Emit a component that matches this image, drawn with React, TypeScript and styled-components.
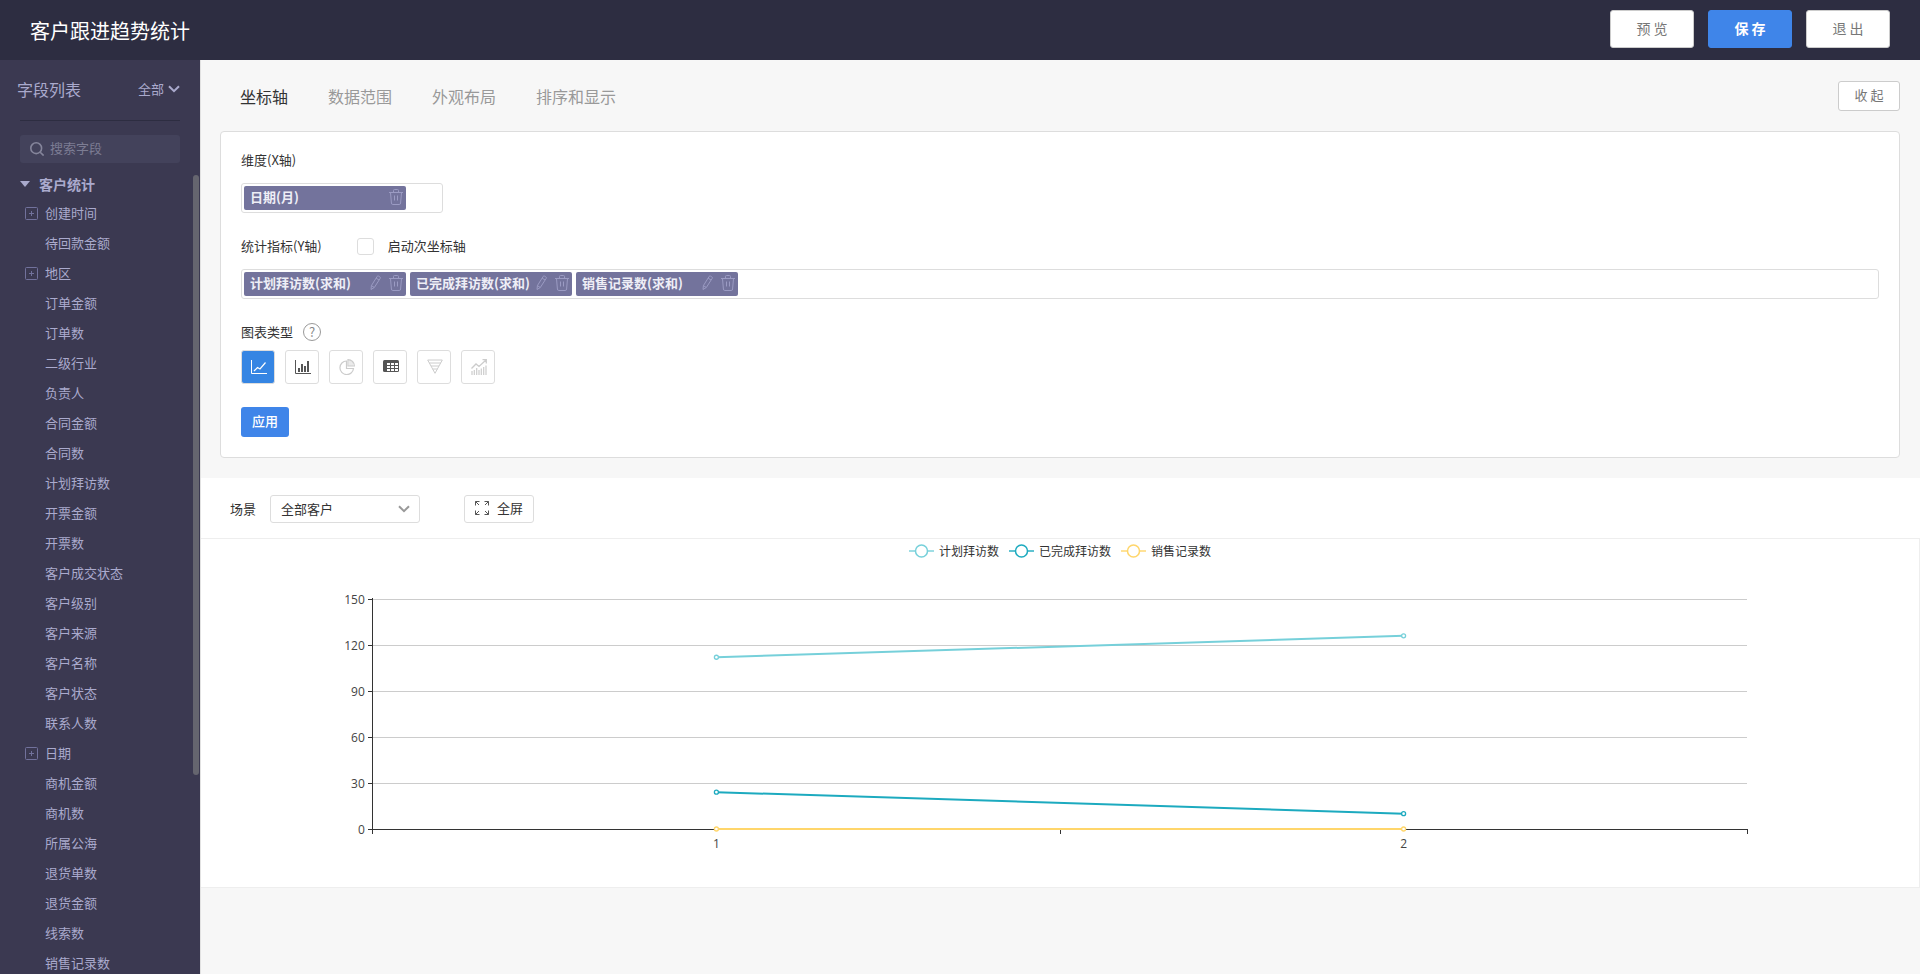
import React, { useState } from "react";
import styled, { createGlobalStyle, css } from "styled-components";

const GlobalStyle = createGlobalStyle`
  *, *::before, *::after { box-sizing: border-box; }
  body {
    margin: 0;
    background: #f7f7f7;
    color: #333;
    font-family: "Noto Sans CJK SC", "Microsoft YaHei", sans-serif;
    font-size: 13px;
    line-height: 20px;
  }
  button, input, select { font: inherit; color: inherit; margin: 0; }
  button { cursor: pointer; }
`;

const Page = styled.div`
  display: flex;
  flex-direction: column;
  height: 100vh;
`;

const Header = styled.header`
  flex: none;
  display: flex;
  align-items: center;
  justify-content: space-between;
  height: 60px;
  padding: 0 30px;
  background: #2d2d41;
`;

const Title = styled.h1`
  margin: 0;
  padding-top: 2px;
  font-size: 20px;
  font-weight: 400;
  line-height: 30px;
  color: #fff;
`;

const HeaderActions = styled.div`
  display: flex;
  gap: 14px;
  height: 40px;
`;

const HeaderButton = styled.button<{ $primary?: boolean }>`
  width: 84px;
  height: 38px;
  padding: 0 0 2px;
  border: 1px solid ${(p) => (p.$primary ? "#3f85e9" : "#ccc")};
  border-radius: 3px;
  background: ${(p) => (p.$primary ? "#3f85e9" : "#fff")};
  color: ${(p) => (p.$primary ? "#fff" : "#777")};
  font-size: 14px;
  font-weight: ${(p) => (p.$primary ? 700 : 400)};
`;

const Body = styled.div`
  flex: 1;
  display: flex;
  min-height: 0;
`;

const Sidebar = styled.aside`
  flex: none;
  display: flex;
  flex-direction: column;
  width: 200px;
  background: #3b3951;
  color: #aaaacd;
`;

const SidebarHead = styled.div`
  display: flex;
  align-items: center;
  justify-content: space-between;
  height: 60px;
  padding: 0 20px 2px 17px;
`;

const SidebarTitle = styled.h2`
  margin: 0;
  font-size: 16px;
  font-weight: 400;
`;

const FilterButton = styled.button`
  display: flex;
  align-items: center;
  gap: 4px;
  padding: 0;
  border: 0;
  background: none;
`;

const Search = styled.label`
  display: flex;
  align-items: center;
  gap: 6px;
  height: 28px;
  margin: 14px 20px 11px;
  padding: 0 10px;
  border-radius: 3px;
  background: #43425b;
  color: #85859b;
`;

const SearchInput = styled.input`
  flex: 1;
  min-width: 0;
  padding: 0 0 2px;
  border: 0;
  outline: 0;
  background: none;
  &::placeholder { color: #7c7c93; opacity: 1; }
`;

const Divider = styled.hr`
  width: 160px;
  height: 1px;
  margin: 0 20px;
  border: 0;
  background: #2d2d41;
`;

const Tree = styled.nav`
  position: relative;
  flex: 1;
  min-height: 0;
  overflow: hidden;
`;

const TreeThumb = styled.div`
  position: absolute;
  top: 1px;
  right: 1px;
  width: 6px;
  height: 75%;
  border-radius: 3px;
  background: #65656f;
`;

const TreeGroup = styled.button`
  display: flex;
  align-items: center;
  gap: 9px;
  margin: 0 0 4px;
  padding: 0 20px;
  border: 0;
  background: none;
  font-size: 14px;
  font-weight: 700;
`;

const TreeList = styled.ul`
  margin: 0;
  padding: 0;
  list-style: none;
`;

const TreeItem = styled.li`
  display: flex;
  align-items: center;
  height: 30px;
  padding-left: 25px;
`;

const TreeToggle = styled.span`
  flex: none;
  display: flex;
  width: 20px;
`;

const Main = styled.main`
  flex: 1;
  min-width: 0;
  overflow: auto;
  border-left: 1px solid #e2e2e2;
`;

const TabBar = styled.div`
  display: flex;
  align-items: center;
  justify-content: space-between;
  height: 71px;
  padding: 0 20px 0 39px;
`;

const Tabs = styled.div`
  display: flex;
  gap: 40px;
`;

const Tab = styled.button<{ $active: boolean }>`
  padding: 0;
  border: 0;
  background: none;
  font-size: 16px;
  line-height: 24px;
  color: ${(p) => (p.$active ? "#333" : "#999")};
`;

const PlainButton = styled.button`
  display: flex;
  align-items: center;
  justify-content: center;
  gap: 8px;
  padding: 0 0 2px;
  border: 1px solid #ddd;
  border-radius: 3px;
  background: #fff;
`;

const CollapseButton = styled(PlainButton)`
  width: 62px;
  height: 30px;
  border-color: #ccc;
  color: #777;
`;

const Panel = styled.section`
  display: flex;
  flex-direction: column;
  margin: 0 20px 20px 19px;
  padding: 18px 20px 20px;
  border: 1px solid #ddd;
  border-radius: 4px;
  background: #fff;
`;

const FieldHead = styled.div`
  display: flex;
  align-items: center;
  height: 20px;
`;

const DropBox = styled.div<{ $narrow?: boolean }>`
  display: flex;
  gap: 4px;
  width: ${(p) => (p.$narrow ? "202px" : "100%")};
  height: 30px;
  margin: 13px 0 23px;
  padding: 2px;
  border: 1px solid #ddd;
  border-radius: 3px;
`;

const Chip = styled.div`
  display: flex;
  align-items: center;
  justify-content: space-between;
  width: 162px;
  height: 24px;
  padding: 0 3px 2px 6px;
  border-radius: 2px;
  background: #73739c;
  color: #eeeef6;
  font-weight: 700;
  white-space: nowrap;
`;

const ChipActions = styled.div`
  display: flex;
  gap: 6px;
`;

const IconButton = styled.button`
  display: flex;
  padding: 0;
  border: 0;
  background: none;
  color: #9b9bc3;
`;

const CheckLabel = styled.label`
  display: flex;
  align-items: center;
  gap: 14px;
  margin-left: 35px;
`;

const CheckBox = styled.input`
  appearance: none;
  width: 17px;
  height: 17px;
  border: 1px solid #ddd;
  border-radius: 3px;
  background: #fff;
  &:checked { background: #3f85e9; }
`;

const HelpButton = styled.button`
  width: 18px;
  height: 18px;
  margin-left: 10px;
  padding: 0;
  border: 1px solid #999;
  border-radius: 50%;
  background: none;
  color: #888;
  line-height: 16px;
`;

const ChartTypes = styled.div`
  display: flex;
  gap: 10px;
  margin: 8px 0 23px;
`;

const TypeButton = styled.button<{ $active: boolean }>`
  display: flex;
  align-items: center;
  justify-content: center;
  width: 34px;
  height: 34px;
  padding: 0 0 0 2px;
  border: 1px solid #ddd;
  border-radius: 3px;
  background: #fff;
  color: #555;
  &:disabled { color: #ccc; cursor: default; }
  ${(p) =>
    p.$active &&
    css`
      background: #3585e3;
      color: #fff;
    `}
`;

const ApplyButton = styled.button`
  width: 48px;
  height: 30px;
  padding: 0 0 2px;
  border: 0;
  border-radius: 3px;
  background: #3f85e9;
  color: #fff;
  font-weight: 500;
`;

const Toolbar = styled.div`
  display: flex;
  align-items: center;
  height: 61px;
  padding: 2px 29px 0;
  border-bottom: 1px solid #eee;
  background: #fff;
`;

const SceneLabel = styled.label`
  margin-right: 14px;
`;

const SelectWrap = styled.div`
  display: grid;
  align-items: center;
  width: 150px;
  margin-right: 44px;
  > * { grid-area: 1 / 1; }
  > svg { justify-self: end; margin-right: 10px; pointer-events: none; color: #999; }
`;

const Select = styled.select`
  appearance: none;
  width: 100%;
  height: 28px;
  padding: 0 30px 0 10px;
  border: 1px solid #ddd;
  border-radius: 3px;
  background: #fff;
`;

const FullscreenButton = styled(PlainButton)`
  width: 70px;
  height: 28px;
`;

const ChartCard = styled.section`
  border: solid #eee;
  border-width: 0 1px 1px 0;
  background: #fff;
`;

const Legend = styled.ul`
  display: flex;
  align-items: center;
  justify-content: center;
  gap: 10px;
  height: 23px;
  margin: 0;
  padding: 0;
  list-style: none;
  font-size: 12px;
`;

const LegendItem = styled.li`
  display: flex;
  align-items: center;
  gap: 5px;
`;

const Plot = styled.svg`
  display: block;
  width: 100%;
  height: 325px;
  font-family: "Open Sans", sans-serif;
  font-size: 12px;
  fill: #444;
`;

const stroke = { fill: "none", stroke: "currentColor" } as const;

const Chevron = () => (
  <svg width="12" height="8" viewBox="0 0 12 8" {...stroke} strokeWidth="2">
    <path d="M1 1.2 6 6.2 11 1.2" />
  </svg>
);

const SearchIcon = () => (
  <svg width="14" height="14" viewBox="0 0 14 14" {...stroke} strokeWidth="1.6">
    <circle cx="6.2" cy="6.2" r="5.4" />
    <path d="M10.2 10.2 13.6 13.6" />
  </svg>
);

const PlusBox = () => (
  <svg width="13" height="13" viewBox="0 0 13 13" fill="none" stroke="#72729c">
    <rect x="0.5" y="0.5" width="12" height="12" rx="1" />
    <path d="M4 6.5h5M6.5 4v5" />
  </svg>
);

const Caret = () => (
  <svg width="10" height="6" viewBox="0 0 10 6" fill="currentColor">
    <path d="M0 0h10L5 6z" />
  </svg>
);

const TrashIcon = () => (
  <svg width="14" height="16" viewBox="0 0 14 16" {...stroke}>
    <path d="M0 3.5h14M4.5 3.5v-2a1 1 0 0 1 1-1h3a1 1 0 0 1 1 1v2M1.5 3.5 2.4 14a1.5 1.5 0 0 0 1.5 1.5h6.2a1.5 1.5 0 0 0 1.5-1.5l.9-10.5M5.5 6.5v5M8.5 6.5v5" />
  </svg>
);

const PencilIcon = () => (
  <svg width="14" height="16" viewBox="0 0 14 16" {...stroke}>
    <path d="M2 14.5 2.4 10.6 8.2 1.4a1 1 0 0 1 1.4-.3l1.3.9a1 1 0 0 1 .3 1.4L5.3 12.5zM7.1 3.1 10 5M2.4 10.6 5.3 12.5" />
  </svg>
);

const LineIcon = () => (
  <svg width="16" height="14" viewBox="0 0 16 14" {...stroke}>
    <path d="M.5 0v13.500H16" />
    <path d="M3 11 6.5 7.5 9 9l5.500-6.500" strokeWidth="1.2" />
  </svg>
);

const BarIcon = () => (
  <svg width="16" height="14" viewBox="0 0 16 14" {...stroke}>
    <path d="M.5 0v13.500H16" />
    <path d="M4 12V8M7 12V4M10 12V6M13 12V1" strokeWidth="2" />
  </svg>
);

const PieIcon = () => (
  <svg width="16" height="16" viewBox="0 0 16 16" {...stroke} strokeWidth="1.2">
    <path d="M7.500 2a6.800 6.800 0 1 0 7 7.500h-7z" />
    <path d="M9 .6v6.400h6.400A6.400 6.400 0 0 0 9 .6z" />
    <path d="M11 1v6M13 2.500V7" strokeWidth=".8" />
  </svg>
);

const TableIcon = () => (
  <svg width="16" height="14" viewBox="0 0 16 14" {...stroke}>
    <rect x="0" y="0" width="16" height="12" rx="1.500" fill="currentColor" stroke="none" />
    <path d="M4 4h11M4 7h11M4 10h11" stroke="#fff" strokeWidth="2" strokeDasharray="3 1" />
  </svg>
);

const FunnelIcon = () => (
  <svg width="16" height="16" viewBox="0 0 16 16" {...stroke}>
    <path d="M.7 1h14.600L8 14.300zM2.200 4h11.600M4 7h8M5.500 10h5" />
  </svg>
);

const ComboIcon = () => (
  <svg width="16" height="16" viewBox="0 0 16 16" {...stroke}>
    <path d="M.5 9.500 5 5 8 7.500l7-6.500M11.500 .7H15.300V4.500" strokeWidth="1.3" />
    <path d="M1 16v-4M3.300 16v-5M5.700 16V9M8 16v-5M10.300 16V9.500M12.700 16V8M15 16V6.500" strokeWidth="1.2" />
  </svg>
);

const ExpandIcon = () => (
  <svg width="14" height="14" viewBox="0 0 14 14" fill="none" stroke="#555">
    <path d="M.5 4.500v-4h4M.5.5 4 4M9.500.5h4v4M13.500.5 10 4M.5 9.500v4h4M.5 13.500 4 10M9.500 13.500h4v-4M13.500 13.500 10 10" />
  </svg>
);

const fields: { name: string; expandable?: boolean }[] = [
  { name: "创建时间", expandable: true },
  { name: "待回款金额" },
  { name: "地区", expandable: true },
  { name: "订单金额" },
  { name: "订单数" },
  { name: "二级行业" },
  { name: "负责人" },
  { name: "合同金额" },
  { name: "合同数" },
  { name: "计划拜访数" },
  { name: "开票金额" },
  { name: "开票数" },
  { name: "客户成交状态" },
  { name: "客户级别" },
  { name: "客户来源" },
  { name: "客户名称" },
  { name: "客户状态" },
  { name: "联系人数" },
  { name: "日期", expandable: true },
  { name: "商机金额" },
  { name: "商机数" },
  { name: "所属公海" },
  { name: "退货单数" },
  { name: "退货金额" },
  { name: "线索数" },
  { name: "销售记录数" },
];

const tabs = ["坐标轴", "数据范围", "外观布局", "排序和显示"];
const metrics = ["计划拜访数(求和)", "已完成拜访数(求和)", "销售记录数(求和)"];

const chartTypes = [
  { name: "折线图", Icon: LineIcon },
  { name: "柱状图", Icon: BarIcon },
  { name: "饼图", Icon: PieIcon, disabled: true },
  { name: "表格", Icon: TableIcon },
  { name: "漏斗图", Icon: FunnelIcon, disabled: true },
  { name: "组合图", Icon: ComboIcon, disabled: true },
];

const series = [
  { name: "计划拜访数", color: "#76d0da", values: [112, 126] },
  { name: "已完成拜访数", color: "#1caabf", values: [24, 10] },
  { name: "销售记录数", color: "#ffd66b", values: [0, 0] },
];

const ticks = [0, 30, 60, 90, 120, 150];
const BASE = 267;
const yOf = (value: number) => BASE - (value * 230) / 150;

const LineChart = () => (
  <Plot role="img" aria-label="客户跟进趋势统计">
    {ticks.map((t) => (
      <g key={t}>
        {t > 0 && (
          <line x1="10%" x2="90%" y1={yOf(t) + 0.5} y2={yOf(t) + 0.5} stroke="#ccc" shapeRendering="crispEdges" />
        )}
        <svg x="10%" y={yOf(t)} overflow="visible">
          <path d="M-5 .5H0" stroke="#333" shapeRendering="crispEdges" />
          <text x="-8" y="5" textAnchor="end">{t}</text>
        </svg>
      </g>
    ))}
    <g stroke="#333" shapeRendering="crispEdges">
      <line x1="10%" x2="10%" y1={yOf(150) - 1} y2={BASE + 5} />
      <line x1="10%" x2="90%" y1={BASE + 0.5} y2={BASE + 0.5} />
      <line x1="50%" x2="50%" y1={BASE} y2={BASE + 5} />
      <line x1="90%" x2="90%" y1={BASE} y2={BASE + 5} />
    </g>
    <text x="30%" y={BASE + 19} textAnchor="middle">1</text>
    <text x="70%" y={BASE + 19} textAnchor="middle">2</text>
    {series.map((s) => (
      <g key={s.name} stroke={s.color} fill="#fff">
        <line x1="30%" x2="70%" y1={yOf(s.values[0])} y2={yOf(s.values[1])} strokeWidth="2" />
        <circle cx="30%" cy={yOf(s.values[0])} r="2" strokeWidth="1.3" />
        <circle cx="70%" cy={yOf(s.values[1])} r="2" strokeWidth="1.3" />
      </g>
    ))}
  </Plot>
);

export default function App() {
  const [tab, setTab] = useState(tabs[0]);
  const [chartType, setChartType] = useState(chartTypes[0].name);

  return (
    <>
      <GlobalStyle />
      <Page>
        <Header>
          <Title>客户跟进趋势统计</Title>
          <HeaderActions>
            <HeaderButton>预 览</HeaderButton>
            <HeaderButton $primary>保 存</HeaderButton>
            <HeaderButton>退 出</HeaderButton>
          </HeaderActions>
        </Header>
        <Body>
          <Sidebar>
            <SidebarHead>
              <SidebarTitle>字段列表</SidebarTitle>
              <FilterButton>
                全部
                <Chevron />
              </FilterButton>
            </SidebarHead>
            <Divider />
            <Search>
              <SearchIcon />
              <SearchInput type="text" placeholder="搜索字段" aria-label="搜索字段" />
            </Search>
            <Tree>
              <TreeGroup>
                <Caret />
                客户统计
              </TreeGroup>
              <TreeList>
                {fields.map((f) => (
                  <TreeItem key={f.name}>
                    <TreeToggle>{f.expandable && <PlusBox />}</TreeToggle>
                    {f.name}
                  </TreeItem>
                ))}
              </TreeList>
              <TreeThumb />
            </Tree>
          </Sidebar>
          <Main>
            <TabBar>
              <Tabs role="tablist">
                {tabs.map((t) => (
                  <Tab key={t} role="tab" aria-selected={t === tab} $active={t === tab} onClick={() => setTab(t)}>
                    {t}
                  </Tab>
                ))}
              </Tabs>
              <CollapseButton>收 起</CollapseButton>
            </TabBar>
            <Panel>
              <FieldHead>维度(X轴)</FieldHead>
              <DropBox $narrow>
                <Chip>
                  日期(月)
                  <IconButton aria-label="删除">
                    <TrashIcon />
                  </IconButton>
                </Chip>
              </DropBox>
              <FieldHead>
                统计指标(Y轴)
                <CheckLabel>
                  <CheckBox type="checkbox" />
                  启动次坐标轴
                </CheckLabel>
              </FieldHead>
              <DropBox>
                {metrics.map((m) => (
                  <Chip key={m}>
                    {m}
                    <ChipActions>
                      <IconButton aria-label="编辑">
                        <PencilIcon />
                      </IconButton>
                      <IconButton aria-label="删除">
                        <TrashIcon />
                      </IconButton>
                    </ChipActions>
                  </Chip>
                ))}
              </DropBox>
              <FieldHead>
                图表类型
                <HelpButton>?</HelpButton>
              </FieldHead>
              <ChartTypes>
                {chartTypes.map(({ name, Icon, disabled }) => (
                  <TypeButton
                    key={name}
                    aria-label={name}
                    disabled={disabled}
                    $active={name === chartType}
                    onClick={() => setChartType(name)}
                  >
                    <Icon />
                  </TypeButton>
                ))}
              </ChartTypes>
              <ApplyButton>应用</ApplyButton>
            </Panel>
            <Toolbar>
              <SceneLabel htmlFor="scene">场景</SceneLabel>
              <SelectWrap>
                <Select id="scene" defaultValue="all">
                  <option value="all">全部客户</option>
                </Select>
                <Chevron />
              </SelectWrap>
              <FullscreenButton>
                <ExpandIcon />
                全屏
              </FullscreenButton>
            </Toolbar>
            <ChartCard>
              <Legend>
                {series.map((s) => (
                  <LegendItem key={s.name}>
                    <svg width="25" height="14" viewBox="0 0 25 14" fill="#fff" stroke={s.color}>
                      <path d="M0 7h25" strokeWidth="2" strokeOpacity=".7" />
                      <circle cx="12.5" cy="7" r="6" strokeWidth="1.5" />
                    </svg>
                    {s.name}
                  </LegendItem>
                ))}
              </Legend>
              <LineChart />
            </ChartCard>
          </Main>
        </Body>
      </Page>
    </>
  );
}
